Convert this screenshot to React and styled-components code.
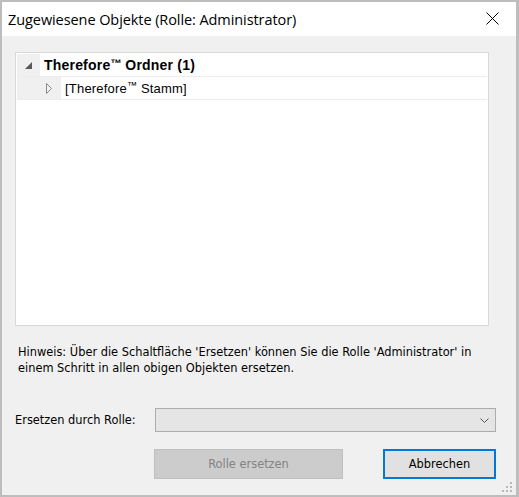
import React from 'react';
import styled, { createGlobalStyle } from 'styled-components';

const GlobalStyle = createGlobalStyle`
  html, body {
    margin: 0;
    padding: 0;
    background: #bdbdbd;
  }
`;

const Window = styled.div`
  box-sizing: border-box;
  width: 519px;
  height: 497px;
  border: 2px solid #bdbdbd;
  border-right-width: 3px;
  background: #f0f0f0;
  display: flex;
  flex-direction: column;
  position: relative;
  font-family: 'DejaVu Sans', sans-serif;
  font-size: 11.4px;
  color: #000;
`;

const TitleBar = styled.div`
  height: 34px;
  background: #ffffff;
  display: flex;
  align-items: center;
  justify-content: space-between;
  padding: 0 16px 0 6px;
  flex-shrink: 0;
`;

const Title = styled.div`
  font-family: 'Open Sans', 'Noto Sans', sans-serif;
  font-size: 14.5px;
  letter-spacing: -0.08px;
`;

const CloseButton = styled.button`
  background: none;
  border: none;
  padding: 0;
  width: 14px;
  height: 14px;
  display: flex;
`;

const Body = styled.div`
  flex: 1;
  display: flex;
  flex-direction: column;
  padding: 16px 20px 0 13px;
`;

const TreePanel = styled.div`
  box-sizing: border-box;
  height: 274px;
  margin-right: 7px;
  background: #ffffff;
  border: 1px solid #d9d9d9;
  padding: 1px;
  display: flex;
  flex-direction: column;
`;

const TreeRow = styled.div`
  height: 22px;
  display: flex;
  border-bottom: 1px solid #ececec;
  font-family: 'Liberation Sans', Arial, sans-serif;
  font-size: ${({ $bold }) => ($bold ? 14 : 13)}px;
  font-weight: ${({ $bold }) => ($bold ? 700 : 400)};
  letter-spacing: 0.2px;
`;

const Indent = styled.div`
  width: ${({ $width }) => $width}px;
  background: #f0f0f0;
  display: flex;
  align-items: center;
  justify-content: flex-end;
  padding-right: ${({ $pad }) => $pad}px;
  box-sizing: border-box;
`;

const Label = styled.div`
  display: flex;
  align-items: center;
  padding-left: 4px;
  white-space: pre;
`;

const Tm = styled.span`
  font-size: 0.78em;
  position: relative;
  top: -0.22em;
  letter-spacing: 0;
`;

const Hint = styled.p`
  margin: 18px 0 0 3px;
  line-height: 16px;
`;

const ComboRow = styled.div`
  display: flex;
  align-items: center;
  margin-top: 32px;
`;

const ComboLabel = styled.span`
  width: 140px;
`;

const Combo = styled.div`
  box-sizing: border-box;
  flex: 1;
  height: 24px;
  background: #e5e5e5;
  border: 1px solid #adadad;
  display: flex;
  align-items: center;
  justify-content: flex-end;
  padding-right: 6px;
`;

const ButtonRow = styled.div`
  display: flex;
  justify-content: flex-end;
  gap: 40px;
  margin-top: 17px;
`;

const Button = styled.button`
  box-sizing: border-box;
  width: ${({ $width }) => $width}px;
  height: 30px;
  font-family: 'DejaVu Sans', sans-serif;
  font-size: 11.4px;
  background: ${({ disabled }) => (disabled ? '#cccccc' : '#e1e1e1')};
  color: ${({ disabled }) => (disabled ? '#838383' : '#000')};
  border: ${({ disabled }) => (disabled ? '1px solid #bfbfbf' : '2px solid #0078d7')};
  padding: 0;
`;

const Grip = styled.svg`
  position: absolute;
  right: 3px;
  bottom: 2px;
`;

const App = () => (
  <>
    <GlobalStyle />
    <Window>
      <TitleBar>
        <Title>Zugewiesene Objekte (Rolle: Administrator)</Title>
        <CloseButton aria-label="Schließen">
          <svg width="13" height="13" viewBox="0 0 13 13">
            <path d="M0.5 0.5 L12.5 12.5 M12.5 0.5 L0.5 12.5" stroke="#000" strokeWidth="1" />
          </svg>
        </CloseButton>
      </TitleBar>

      <Body>
        <TreePanel>
          <TreeRow $bold>
            <Indent $width={23} $pad={8}>
              <svg width="7" height="7" viewBox="0 0 7 7">
                <path d="M7 0 L7 7 L0 7 Z" fill="#595959" />
              </svg>
            </Indent>
            <Label>Therefore<Tm>™</Tm> Ordner (1)</Label>
          </TreeRow>
          <TreeRow>
            <Indent $width={44} $pad={9}>
              <svg width="6" height="11" viewBox="0 0 6 11">
                <path d="M0.5 0.5 L5.5 5.5 L0.5 10.5 Z" fill="none" stroke="#8a8a8a" strokeWidth="1" />
              </svg>
            </Indent>
            <Label>[Therefore<Tm>™</Tm> Stamm]</Label>
          </TreeRow>
        </TreePanel>

        <Hint>
          Hinweis: Über die Schaltfläche 'Ersetzen' können Sie die Rolle 'Administrator' in
          <br />
          einem Schritt in allen obigen Objekten ersetzen.
        </Hint>

        <ComboRow>
          <ComboLabel>Ersetzen durch Rolle:</ComboLabel>
          <Combo>
            <svg width="9" height="5" viewBox="0 0 9 5">
              <path d="M0.5 0.5 L4.5 4.5 L8.5 0.5" fill="none" stroke="#555" strokeWidth="1" />
            </svg>
          </Combo>
        </ComboRow>

        <ButtonRow>
          <Button $width={189} disabled>Rolle ersetzen</Button>
          <Button $width={113}>Abbrechen</Button>
        </ButtonRow>
      </Body>

      <Grip width="11" height="11" viewBox="0 0 11 11">
        <g fill="#b8b8b8">
          <rect x="8" y="0" width="2" height="2" />
          <rect x="4" y="4" width="2" height="2" />
          <rect x="8" y="4" width="2" height="2" />
          <rect x="0" y="8" width="2" height="2" />
          <rect x="4" y="8" width="2" height="2" />
          <rect x="8" y="8" width="2" height="2" />
        </g>
      </Grip>
    </Window>
  </>
);

export default App;
